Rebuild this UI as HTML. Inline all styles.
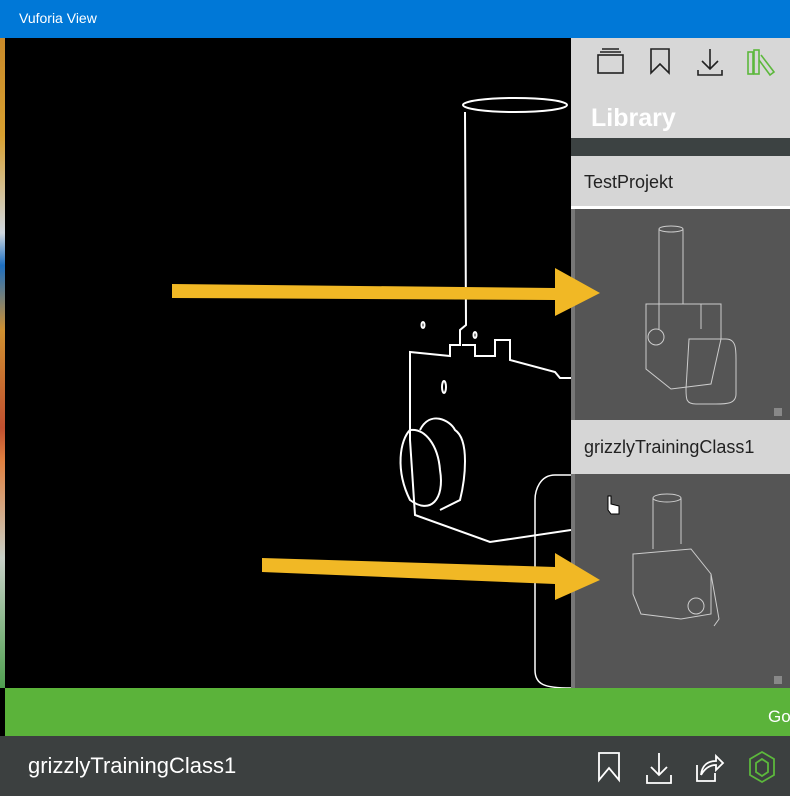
<!DOCTYPE html>
<html><head><meta charset="utf-8"><style>
*{margin:0;padding:0;box-sizing:border-box}
body{width:790px;height:796px;overflow:hidden;background:#000;font-family:"Liberation Sans",sans-serif;position:relative}
.a{position:absolute}
</style></head><body>
<div class="a" style="left:0;top:0;width:790px;height:38px;background:#0078d7"></div>
<div class="a" style="left:19px;top:10px;color:#fff;font-size:14px">Vuforia View</div>
<div class="a" style="left:0;top:38px;width:5px;height:650px;background:linear-gradient(#c98a2a 0,#d8a030 15%,#d0d8e0 30%,#1e6fc0 35%,#d09030 45%,#c05030 60%,#e08040 65%,#c8d0c8 80%,#50a050 100%)"></div>
<!-- drawing -->
<svg class="a" style="left:0;top:38px" width="571" height="650" viewBox="0 38 571 650">
<g fill="none" stroke="#fff" stroke-width="2">
<ellipse cx="515" cy="105" rx="52" ry="7"/>
<path d="M465 112 L466 325 L460 330 L460 345 L450 345 L450 356 L410 352 L410 440 L415 515 L490 542 L571 530"/>
<path d="M462 345 L475 345 L475 356 L495 356 L495 340 L510 340 L510 360 L555 372 L560 378 L571 378"/>
<path d="M410 430 C400 440 395 470 410 500 C430 515 445 500 440 470 C438 445 425 428 410 430Z"/>
<path d="M420 430 C430 410 450 420 455 430 C470 440 465 480 460 500 L440 510"/>
<path d="M571 475 L555 475 C540 475 535 490 535 500 L535 670 C535 685 545 688 571 688" stroke-width="1.5"/>
<ellipse cx="444" cy="387" rx="2" ry="6"/>
<ellipse cx="475" cy="335" rx="1.5" ry="3"/>
<ellipse cx="423" cy="325" rx="1.5" ry="3"/>
</g>
</svg>
<!-- right panel -->
<div class="a" style="left:571px;top:38px;width:219px;height:100px;background:#d7d7d7"></div>
<svg class="a" style="left:571px;top:38px" width="219" height="60">
<g fill="none" stroke="#222" stroke-width="1.6">
<rect x="27" y="17" width="25" height="18"/><path d="M29 14 H50 M31 11 H48"/>
<path d="M80 11 V35 L89 26 L98 35 V11 Z"/>
<path d="M139 11 V31 M131 23 L139 31 L147 23 M127 32 V37 H151 V32"/>
</g>
<g fill="none" stroke="#5cb83c" stroke-width="1.6">
<rect x="177" y="14" width="5" height="22"/><rect x="183" y="12" width="5" height="24"/><path d="M190 17 L203 34 L199 37 L188 22"/>
</g>
</svg>
<div class="a" style="left:591px;top:104px;color:#fff;font-size:25px;font-weight:bold">Library</div>
<div class="a" style="left:571px;top:138px;width:219px;height:18px;background:#3c4242"></div>
<div class="a" style="left:571px;top:156px;width:219px;height:50px;background:#d6d6d6"></div>
<div class="a" style="left:584px;top:172px;color:#222;font-size:18px">TestProjekt</div>
<div class="a" style="left:571px;top:206px;width:219px;height:3px;background:#fff"></div>
<div class="a" style="left:571px;top:209px;width:219px;height:211px;background:#555;border-left:4px solid #777"></div>
<svg class="a" style="left:571px;top:209px" width="219" height="211"><g fill="none" stroke="#ccc" stroke-width="1">
<ellipse cx="100" cy="20" rx="12" ry="3"/><path d="M88 20 V120 M112 20 V95 L130 95 V120"/>
<path d="M75 95 L150 95 L150 130 L140 175 L100 180 L75 160 Z"/><circle cx="85" cy="128" r="8"/>
<path d="M118 130 L155 130 C165 130 165 140 165 150 L165 185 C165 195 155 195 145 195 L125 195 C115 195 115 190 115 180 Z"/></g>
<rect x="203" y="199" width="8" height="8" fill="#888"/></svg>
<div class="a" style="left:571px;top:420px;width:219px;height:54px;background:#d6d6d6"></div>
<div class="a" style="left:584px;top:437px;color:#222;font-size:18px">grizzlyTrainingClass1</div>
<div class="a" style="left:571px;top:474px;width:219px;height:214px;background:#555;border-left:4px solid #777"></div>
<svg class="a" style="left:571px;top:474px" width="219" height="214"><g fill="none" stroke="#ccc" stroke-width="1">
<ellipse cx="96" cy="24" rx="14" ry="4"/><path d="M82 24 V75 M110 24 V70"/>
<path d="M62 80 L120 75 L140 100 L140 140 L110 145 L70 140 L62 120 Z"/><circle cx="125" cy="132" r="8"/><path d="M140 100 L148 145 L143 152"/></g>
<rect x="203" y="202" width="8" height="8" fill="#888"/>
<path d="M37 22 v14 l3 4 h8 v-8 l-8 -2 v-8 z" fill="#fff" stroke="#000" stroke-width="1"/></svg>
<!-- arrows -->
<svg class="a" style="left:0;top:0" width="790" height="796">
<path d="M172 284 L555 288 L555 268 L600 293 L555 316 L555 300 L172 298 Z" fill="#f1b825"/>
<path d="M262 558 L555 567 L555 553 L600 580 L555 600 L555 584 L262 572 Z" fill="#f1b825"/>
</svg>
<!-- green bar -->
<div class="a" style="left:5px;top:688px;width:785px;height:48px;background:#5bb33a"></div>
<div class="a" style="left:768px;top:707px;color:#fff;font-size:17px">Go</div>
<div class="a" style="left:0;top:736px;width:790px;height:60px;background:#3c4040"></div>
<div class="a" style="left:28px;top:753px;color:#fff;font-size:22px">grizzlyTrainingClass1</div>
<svg class="a" style="left:590px;top:745px" width="200" height="45"><g fill="none" stroke="#fff" stroke-width="1.8">
<path d="M9 8 V35 L19 23 L29 35 V8 Z"/>
<path d="M69 8 V30 M61 22 L69 30 L77 22 M57 30 V38 H81 V30"/>
<path d="M107 20 V36 H125 V28 M111 30 C112 20 118 16 126 16 V11 L133 18 L126 25 V20 C120 20 115 23 111 30"/>
</g><g fill="none" stroke="#5cb83c" stroke-width="1.8">
<polygon points="172,7 184,14 184,30 172,37 160,30 160,14"/><polygon points="172,14 178,18 178,27 172,31 166,27 166,18"/></g></svg>
</body></html>
